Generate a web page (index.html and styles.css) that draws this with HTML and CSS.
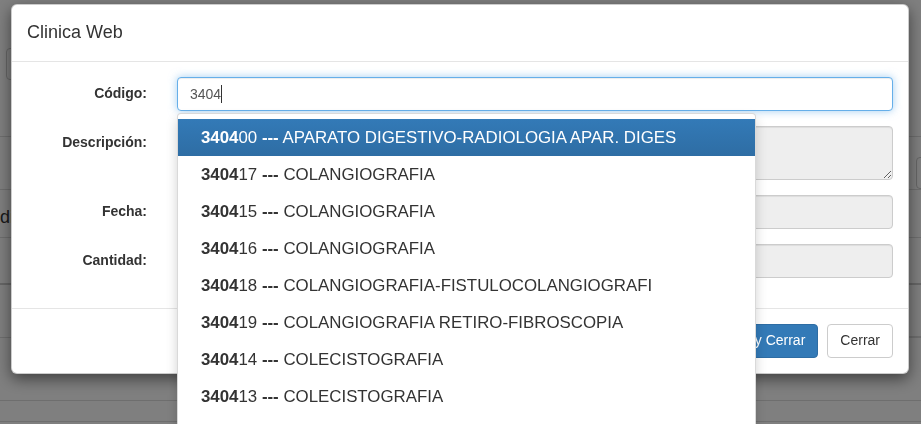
FILE: index.html
```html
<!DOCTYPE html>
<html lang="es">
  <head>
    <meta charset="UTF-8" />
    <meta name="viewport" content="width=device-width, initial-scale=1.0" />
    <title>Clinica Web</title>
    <link rel="stylesheet" href="styles.css">
  </head>
  <body>
    <!-- Page behind the modal -->
    <div class="page">
      <div class="searchbar"></div>
      <div class="grid">
        <div class="grid-row row-tall">
          <a class="link" href="#">Ver</a>
          <span class="side-btn"></span>
        </div>
        <div class="grid-row row-title">
          <h3 class="page-title">Medicamentos</h3>
        </div>
        <div class="grid-row row-head"></div>
        <div class="grid-row row-mid"><span class="side-line"></span></div>
        <div class="grid-row row-low"></div>
        <div class="grid-row row-last"></div>
      </div>
    </div>

    <div class="backdrop"></div>

    <!-- Modal -->
    <div class="modal">
      <div class="modal-header">
        <h4 class="modal-title">Clinica Web</h4>
      </div>
      <div class="modal-body">
        <form class="form-horizontal">
          <div class="form-group">
            <label class="control-label" for="codigo">Código:</label>
            <div class="field">
              <input type="text" id="codigo" class="form-control focused" value="3404" autocomplete="off" />
              <span class="caret-line"></span>
              <ul class="typeahead">
                <li class="active"><b>3404</b>00 <b>---</b> APARATO DIGESTIVO-RADIOLOGIA APAR. DIGES</li>
                <li><b>3404</b>17 <b>---</b> COLANGIOGRAFIA</li>
                <li><b>3404</b>15 <b>---</b> COLANGIOGRAFIA</li>
                <li><b>3404</b>16 <b>---</b> COLANGIOGRAFIA</li>
                <li><b>3404</b>18 <b>---</b> COLANGIOGRAFIA-FISTULOCOLANGIOGRAFI</li>
                <li><b>3404</b>19 <b>---</b> COLANGIOGRAFIA RETIRO-FIBROSCOPIA</li>
                <li><b>3404</b>14 <b>---</b> COLECISTOGRAFIA</li>
                <li><b>3404</b>13 <b>---</b> COLECISTOGRAFIA</li>
              </ul>
            </div>
          </div>
          <div class="form-group">
            <label class="control-label" for="descripcion">Descripción:</label>
            <div class="field">
              <textarea id="descripcion" class="form-control" rows="2" readonly></textarea>
            </div>
          </div>
          <div class="form-group">
            <label class="control-label" for="fecha">Fecha:</label>
            <div class="field">
              <input type="text" id="fecha" class="form-control" readonly />
            </div>
          </div>
          <div class="form-group">
            <label class="control-label" for="cantidad">Cantidad:</label>
            <div class="field">
              <input type="text" id="cantidad" class="form-control" readonly />
            </div>
          </div>
        </form>
      </div>
      <div class="modal-footer">
        <button type="button" class="btn btn-primary">Guardar y Cerrar</button>
        <button type="button" class="btn btn-default">Cerrar</button>
      </div>
    </div>
  </body>
</html>
```

FILE: styles.css
```css
html,
body {
  margin: 0;
  padding: 0;
  height: 100%;
  overflow: hidden;
}
body {
  font-family: "Liberation Sans", Arial, Helvetica, sans-serif;
  font-size: 14px;
  line-height: 1.42857;
  color: #333;
  background-color: #fff;
}

/* page under the backdrop */
.page {
  padding-top: 48px;
}
.searchbar {
  margin-left: 6px;
  width: 400px;
  height: 30px;
  border: 1px solid #ccc;
  border-radius: 4px;
}
.grid {
  margin-top: 56px;
}
.grid-row {
  border-top: 1px solid #ddd;
  display: flex;
  align-items: flex-end;
  justify-content: space-between;
}
.row-tall {
  height: 52px;
}
.link {
  color: #337ab7;
  text-decoration: none;
  margin-left: -22px;
  margin-bottom: 8px;
}
.side-btn {
  width: 40px;
  height: 30px;
  border: 1px solid #ccc;
  border-radius: 4px;
  margin-right: -37px;
}
.row-title {
  height: 47px;
}
.page-title {
  margin: 0 0 6px -25px;
  font-size: 18px;
  font-weight: 500;
  color: #333;
}
.row-head {
  height: 45px;
  border-bottom: 2px solid #ccc;
}
.row-mid {
  height: 52px;
  border-top: none;
}
.side-line {
  margin-left: auto;
  width: 20px;
  border-bottom: 1px solid #ddd;
}
.row-low {
  height: 62px;
}
.row-last {
  height: 20px;
  border-bottom: 1px solid #ddd;
}

.backdrop {
  position: fixed;
  inset: 0;
  background-color: rgba(0, 0, 0, 0.5);
}

/* modal */
.modal {
  position: fixed;
  top: 4px;
  left: 11px;
  width: 896px;
  background-color: #fff;
  border: 1px solid rgba(0, 0, 0, 0.2);
  border-radius: 6px;
  box-shadow: 0 5px 15px rgba(0, 0, 0, 0.5);
}
.modal-header {
  padding: 15px;
  border-bottom: 1px solid #e5e5e5;
}
.modal-title {
  margin: 0;
  font-size: 18px;
  font-weight: 500;
  line-height: 1.42857;
}
.modal-body {
  padding: 15px;
}
.form-horizontal {
  margin: 0;
}
.form-group {
  display: grid;
  grid-template-columns: 120px 1fr;
  column-gap: 30px;
  margin-bottom: 15px;
}
.control-label {
  padding-top: 7px;
  text-align: right;
  font-weight: bold;
}
.field {
  position: relative;
}
.form-control {
  display: block;
  box-sizing: border-box;
  width: 100%;
  height: 34px;
  padding: 6px 12px;
  font-family: inherit;
  font-size: 14px;
  line-height: 1.42857;
  color: #555;
  background-color: #fff;
  border: 1px solid #ccc;
  border-radius: 4px;
  box-shadow: inset 0 1px 1px rgba(0, 0, 0, 0.075);
  outline: none;
  margin: 0;
}
textarea.form-control {
  height: 54px;
  resize: vertical;
}
.form-control[readonly] {
  background-color: #eee;
}
.form-control.focused {
  border-color: #66afe9;
  box-shadow: inset 0 1px 1px rgba(0, 0, 0, 0.075), 0 0 8px rgba(102, 175, 233, 0.6);
}
.caret-line {
  position: absolute;
  left: 44px;
  top: 8px;
  width: 1px;
  height: 18px;
  background-color: #333;
}

/* autocomplete list */
.typeahead {
  position: absolute;
  top: 36px;
  left: 0;
  z-index: 10;
  width: 579px;
  box-sizing: border-box;
  margin: 0;
  padding: 5px 0 20px;
  list-style: none;
  background-color: #fff;
  border: 1px solid rgba(0, 0, 0, 0.15);
  border-radius: 4px;
  box-shadow: 0 6px 12px rgba(0, 0, 0, 0.175);
}
.typeahead li {
  height: 37px;
  line-height: 37px;
  padding-left: 23px;
  font-size: 16.85px;
  color: #333;
  white-space: nowrap;
}
.typeahead li.active {
  color: #fff;
  background-image: linear-gradient(to bottom, #337ab7 0, #2e6da4 100%);
}

/* footer */
.modal-footer {
  display: flex;
  justify-content: flex-end;
  gap: 9px;
  padding: 15px;
  border-top: 1px solid #e5e5e5;
}
.btn {
  height: 34px;
  padding: 6px 12px;
  font-family: inherit;
  font-size: 14px;
  line-height: 1.42857;
  border: 1px solid transparent;
  border-radius: 4px;
  cursor: pointer;
}
.btn-primary {
  color: #fff;
  background-color: #337ab7;
  border-color: #2e6da4;
}
.btn-default {
  color: #333;
  background-color: #fff;
  border-color: #ccc;
}
```
